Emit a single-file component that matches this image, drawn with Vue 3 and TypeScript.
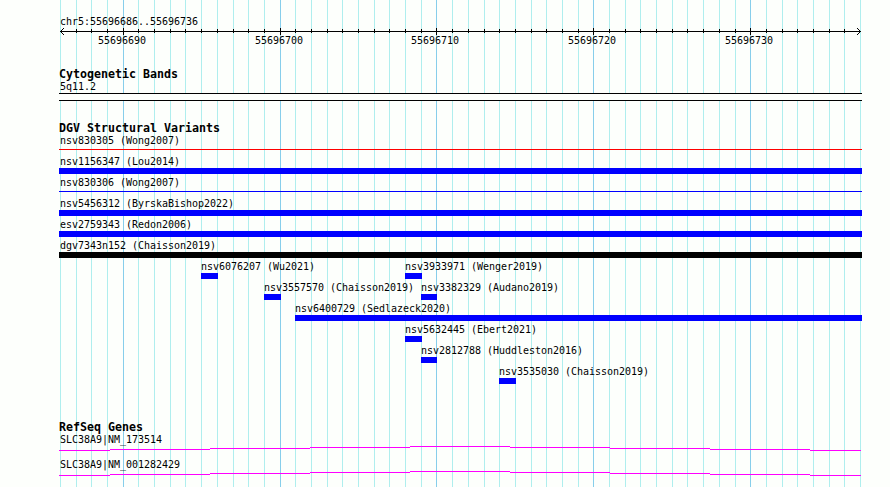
<script setup lang="ts">
interface Feature {
  label: string
  from: number
  to: number
  kind: 'bar' | 'line-red' | 'line-blue' | 'bar-black'
}

interface Gene {
  label: string
}

const START = 55696686
const SPAN = 51
const EDGE = 60
const WIDTH = 800

const gridX = (i: number): number => Math.round(EDGE + (i * WIDTH) / SPAN)

const gridLines = Array.from({ length: SPAN + 1 }, (_, i) => ({
  x: gridX(i),
  major: (START + i) % 10 === 0,
  position: START + i,
}))
const ticks = gridLines.slice(1, -1)
const majorTicks = gridLines.filter((g) => g.major)

const whole = (label: string, kind: Feature['kind']): Feature[] => [{ label, from: 0, to: SPAN, kind }]
const part = (label: string, from: number, to: number): Feature => ({ label, from, to, kind: 'bar' })

const variantRows: Feature[][] = [
  whole('nsv830305 (Wong2007)', 'line-red'),
  whole('nsv1156347 (Lou2014)', 'bar'),
  whole('nsv830306 (Wong2007)', 'line-blue'),
  whole('nsv5456312 (ByrskaBishop2022)', 'bar'),
  whole('esv2759343 (Redon2006)', 'bar'),
  whole('dgv7343n152 (Chaisson2019)', 'bar-black'),
  [part('nsv6076207 (Wu2021)', 9, 10), part('nsv3933971 (Wenger2019)', 22, 23)],
  [part('nsv3557570 (Chaisson2019)', 13, 14), part('nsv3382329 (Audano2019)', 23, 24)],
  [part('nsv6400729 (Sedlazeck2020)', 15, SPAN)],
  [part('nsv5632445 (Ebert2021)', 22, 23)],
  [part('nsv2812788 (Huddleston2016)', 23, 24)],
  [part('nsv3535030 (Chaisson2019)', 28, 29)],
]

const featureBox = (f: Feature) => {
  const left = f.from === 0 ? EDGE - 1 : gridX(f.from)
  const right = gridX(f.to) + (f.to === SPAN ? 2 : 1)
  return { left: `${left}px`, width: `${right - left}px` }
}

const genes: Gene[] = [{ label: 'SLC38A9|NM_173514' }, { label: 'SLC38A9|NM_001282429' }]

// Intron line: a shallow arch stepped one pixel at a time.
const intronSteps = [
  [59, 110, 4], [110, 210, 3], [210, 310, 2], [310, 410, 1], [410, 510, 0],
  [510, 610, 1], [610, 710, 2], [710, 810, 3], [810, 861, 4],
].map(([x, end, y]) => ({ x, y, width: end - x }))
</script>

<template>
  <main class="browser">
    <svg class="grid" width="890" height="487" shape-rendering="crispEdges" aria-hidden="true">
      <rect
        v-for="g in gridLines"
        :key="g.position"
        :x="g.x"
        y="0"
        width="1"
        height="487"
        :class="g.major ? 'major' : 'minor'"
      />
    </svg>

    <header class="ruler">
      <div class="label">chr5:55696686..55696736</div>
      <svg class="axis" width="890" height="9" shape-rendering="crispEdges">
        <rect x="60" y="4" width="801" height="1" />
        <rect
          v-for="t in ticks"
          :key="t.position"
          :x="t.x"
          :y="t.major ? 1 : 2"
          width="1"
          :height="t.major ? 7 : 4"
        />
        <path d="M61 3h1v1h-1zM62 2h1v1h-1zM63 1h1v1h-1zM61 5h1v1h-1zM62 6h1v1h-1zM63 7h1v1h-1z" />
        <path d="M859 3h1v1h-1zM858 2h1v1h-1zM857 1h1v1h-1zM859 5h1v1h-1zM858 6h1v1h-1zM857 7h1v1h-1z" />
      </svg>
      <div class="numbers">
        <span
          v-for="t in majorTicks"
          :key="t.position"
          class="label number"
          :style="{ left: `${t.x - 25}px` }"
        >{{ t.position }}</span>
      </div>
    </header>

    <section class="bands">
      <h2>Cytogenetic Bands</h2>
      <div class="label">5q11.2</div>
      <div class="band"></div>
    </section>

    <section class="variants">
      <h2>DGV Structural Variants</h2>
      <div v-for="(row, i) in variantRows" :key="i" class="row">
        <div v-for="f in row" :key="f.label" class="feature" :style="featureBox(f)">
          <span class="label" :class="{ inset: f.from === 0 }">{{ f.label }}</span>
          <span class="glyph" :class="f.kind"></span>
        </div>
      </div>
    </section>

    <section class="genes">
      <h2>RefSeq Genes</h2>
      <div v-for="g in genes" :key="g.label" class="gene">
        <div class="label">{{ g.label }}</div>
        <svg class="intron" width="890" height="5" shape-rendering="crispEdges">
          <rect v-for="s in intronSteps" :key="s.x" :x="s.x" :y="s.y" :width="s.width" height="1" />
        </svg>
      </div>
    </section>
  </main>
</template>

<style>
body {
  background: #fdfffc;
}
</style>

<style scoped>
.browser {
  position: relative;
  width: 890px;
  height: 487px;
  overflow: hidden;
  background: #fdfffc;
  color: #000;
  font-family: 'DejaVu Sans Mono', monospace;
}
.grid {
  position: absolute;
  inset: 0;
}
.minor { fill: #afeeee; }
.major { fill: #87ceeb; }
svg { display: block; }
.ruler, section { position: relative; }

.label {
  display: block;
  height: 12px;
  padding-left: 60px;
  font-size: 10px;
  line-height: 12px;
  letter-spacing: -0.02px;
  white-space: pre;
  transform: scaleY(1.08);
  transform-origin: 0 10px;
}
h2 {
  margin: 0;
  height: 13px;
  padding-left: 59px;
  font-size: 11.63px;
  font-weight: 700;
  line-height: 12px;
  white-space: pre;
}

.ruler {
  height: 68px;
  padding-top: 16px;
  box-sizing: border-box;
}
.axis {
  margin-top: -1px;
  fill: #000;
}
.numbers {
  position: relative;
  height: 12px;
  margin-top: -1px;
}
.number {
  position: absolute;
  top: 0;
  padding-left: 0;
}

.bands { height: 54px; }
.band {
  height: 6px;
  width: 803px;
  margin-left: 59px;
  border-top: 1px solid #000;
  border-bottom: 1px solid #000;
  background: #fdfffc;
}

.variants { height: 299px; }
.row {
  position: relative;
  height: 21px;
}
.feature {
  position: absolute;
  top: 0;
}
.feature .label { padding-left: 0; }
.feature .inset { padding-left: 1px; }
.glyph {
  display: block;
  height: 6px;
}
.bar { background: #00f; }
.bar-black { background: #000; }
.line-red,
.line-blue {
  height: 1px;
  margin-top: 2px;
}
.line-red { background: #f00; }
.line-blue { background: #00f; }

.gene { height: 25px; }
.intron {
  fill: #f0f;
}
</style>
